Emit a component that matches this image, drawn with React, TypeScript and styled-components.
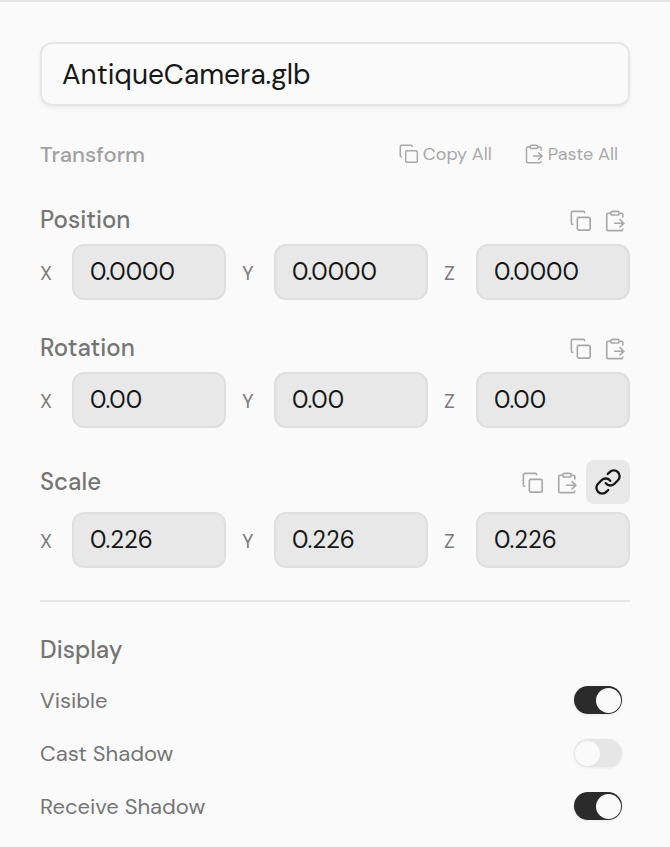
import React, { useId, useState } from "react";
import styled, { createGlobalStyle } from "styled-components";

const GlobalStyle = createGlobalStyle`
  *, *::before, *::after { box-sizing: border-box; }
  body {
    margin: 0;
    background: #fafafa;
    color: #171717;
    font-family: "DM Sans", Inter, "Liberation Sans", sans-serif;
  }
  button, input { font: inherit; color: inherit; margin: 0; }
  h2, h3 { margin: 0; }
`;

const Panel = styled.main`
  display: flex;
  flex-direction: column;
  gap: 32px;
  padding: 40px 40px 26px;
  border-top: 2px solid #e4e4e4;
`;

const NameInput = styled.input`
  width: 100%;
  height: 64px;
  padding: 0 20px;
  border: 2px solid #e6e6e6;
  border-radius: 12px;
  background: #fafafa;
  box-shadow: 0 2px 4px rgba(0, 0, 0, 0.06);
  font-size: 28px;
  outline-color: #a3a3a3;
`;

const Toolbar = styled.header`
  display: flex;
  align-items: center;
  justify-content: space-between;
  height: 34px;
  padding: 0 12px 2px 0;
`;

const PanelTitle = styled.h2`
  color: #a0a0a0;
  font-size: 22px;
  font-weight: 500;
`;

const ToolbarActions = styled.div`
  display: flex;
  gap: 32px;
`;

const TextButton = styled.button`
  display: flex;
  align-items: center;
  gap: 4px;
  padding: 0;
  border: 0;
  background: none;
  color: #a8a8a8;
  font-size: 18px;
  line-height: 24px;
  cursor: pointer;
`;

const Group = styled.section`
  display: flex;
  flex-direction: column;
  gap: 8px;
`;

const GroupHeader = styled.div`
  display: flex;
  align-items: center;
  justify-content: space-between;
  min-height: 32px;
`;

const GroupTitle = styled.h3`
  color: #757575;
  font-size: 24px;
  font-weight: 500;
  line-height: 32px;
`;

const HeaderActions = styled.div<{ $inset: boolean }>`
  display: flex;
  align-items: center;
  gap: 12px;
  padding-right: ${(p) => (p.$inset ? "4px" : "0")};
`;

const IconButton = styled.button`
  display: flex;
  padding: 2px 0 0;
  border: 0;
  background: none;
  color: #a8a8a8;
  cursor: pointer;
`;

const LinkToggle = styled.button`
  display: grid;
  place-items: center;
  width: 44px;
  height: 44px;
  margin-left: -4px;
  padding: 0;
  border: 0;
  border-radius: 8px;
  background: #e8e8e8;
  color: #171717;
  cursor: pointer;
`;

const AxisGrid = styled.div`
  display: grid;
  grid-template-columns: repeat(3, minmax(0, 1fr));
  gap: 16px;
`;

const AxisLabel = styled.label`
  display: flex;
  align-items: center;
  color: #7a7a7a;
  font-size: 20px;
`;

const AxisName = styled.span`
  flex: 0 0 32px;
  padding-top: 2px;
`;

const AxisInput = styled.input`
  flex: 1;
  min-width: 0;
  height: 56px;
  padding: 0 16px 2px;
  border: 2px solid #dfdfdf;
  border-radius: 12px;
  background: #e8e8e8;
  color: #171717;
  font-size: 24px;
  outline-color: #a3a3a3;
`;

const Divider = styled.hr`
  width: 100%;
  height: 2px;
  margin: 0;
  border: 0;
  background: #e6e6e6;
`;

const DisplaySection = styled.section`
  display: flex;
  flex-direction: column;
  gap: 20px;
`;

const OptionList = styled.div`
  display: flex;
  flex-direction: column;
  gap: 25px;
`;

const OptionRow = styled.div`
  display: flex;
  align-items: center;
  justify-content: space-between;
  height: 28px;
  padding-right: 8px;
`;

const OptionLabel = styled.label`
  padding-top: 2px;
  color: #757575;
  font-size: 22px;
  line-height: 28px;
`;

const Switch = styled.input`
  appearance: none;
  display: flex;
  align-items: center;
  width: 48px;
  height: 28px;
  padding: 1px;
  border-radius: 14px;
  background: #e6e6e6;
  box-shadow: 0 1px 3px rgba(0, 0, 0, 0.08);
  cursor: pointer;

  &::before {
    content: "";
    width: 25px;
    height: 25px;
    border-radius: 50%;
    background: #fafafa;
  }

  &:checked {
    background: #2b2b2b;
    justify-content: flex-end;
  }
`;

const Stroked = styled.svg`
  display: block;
  fill: none;
  stroke: currentColor;
  stroke-linecap: round;
  stroke-linejoin: round;
`;

function CopyIcon({ size }: { size: number }) {
  return (
    <Stroked width={size} height={size} viewBox="0 0 24 24" strokeWidth="1.8" aria-hidden="true">
      <rect x="8" y="8" width="14" height="14" rx="1.5" />
      <path d="M3 15.5A1.5 1.5 0 0 1 1.5 14V3A1.5 1.5 0 0 1 3 1.500h11.500A1.500 1.500 0 0 1 16 3" />
    </Stroked>
  );
}

function PasteIcon({ size }: { size: number }) {
  return (
    <Stroked width={size} height={size} viewBox="0 0 24 24" strokeWidth="1.8" aria-hidden="true">
      <rect x="7.5" y="1.5" width="9" height="4" rx="1.5" />
      <path d="M7.5 3.5h-3A1.5 1.5 0 0 0 3 5v16a1.5 1.5 0 0 0 1.5 1.5h14.2a1.8 1.8 0 0 0 1.8-1.5" />
      <path d="M16.5 3.5H19A1.5 1.5 0 0 1 20.5 5v2.5" />
      <path d="M11.5 14.5h10" />
      <path d="m17.5 10.5 4 4-4 4" />
    </Stroked>
  );
}

function LinkIcon() {
  return (
    <Stroked width="28" height="28" viewBox="0 0 24 24" strokeWidth="2" aria-hidden="true">
      <path d="M10 13a5 5 0 0 0 7.54.54l3-3a5 5 0 0 0-7.07-7.07l-1.72 1.71" />
      <path d="M14 11a5 5 0 0 0-7.54-.54l-3 3a5 5 0 0 0 7.07 7.07l1.71-1.71" />
    </Stroked>
  );
}

type VectorProps = { title: string; initial: string; linkable?: boolean };

function VectorGroup({ title, initial, linkable = false }: VectorProps) {
  const [values, setValues] = useState([initial, initial, initial]);
  const [linked, setLinked] = useState(linkable);

  const update = (index: number, value: string) =>
    setValues((prev) => prev.map((v, i) => (linked || i === index ? value : v)));

  return (
    <Group>
      <GroupHeader>
        <GroupTitle>{title}</GroupTitle>
        <HeaderActions $inset={!linkable}>
          <IconButton type="button" aria-label={`Copy ${title}`}>
            <CopyIcon size={22} />
          </IconButton>
          <IconButton type="button" aria-label={`Paste ${title}`}>
            <PasteIcon size={22} />
          </IconButton>
          {linkable && (
            <LinkToggle
              type="button"
              aria-label="Link axes"
              aria-pressed={linked}
              onClick={() => setLinked(!linked)}
            >
              <LinkIcon />
            </LinkToggle>
          )}
        </HeaderActions>
      </GroupHeader>
      <AxisGrid>
        {["X", "Y", "Z"].map((axis, i) => (
          <AxisLabel key={axis}>
            <AxisName>{axis}</AxisName>
            <AxisInput
              inputMode="decimal"
              value={values[i]}
              onChange={(e) => update(i, e.target.value)}
            />
          </AxisLabel>
        ))}
      </AxisGrid>
    </Group>
  );
}

function Option({ label, checked = false }: { label: string; checked?: boolean }) {
  const id = useId();
  return (
    <OptionRow>
      <OptionLabel htmlFor={id}>{label}</OptionLabel>
      <Switch id={id} type="checkbox" role="switch" defaultChecked={checked} />
    </OptionRow>
  );
}

export default function App() {
  return (
    <>
      <GlobalStyle />
      <Panel>
        <NameInput aria-label="Object name" defaultValue="AntiqueCamera.glb" spellCheck={false} />
        <Toolbar>
          <PanelTitle>Transform</PanelTitle>
          <ToolbarActions>
            <TextButton type="button">
              <CopyIcon size={20} />
              Copy All
            </TextButton>
            <TextButton type="button">
              <PasteIcon size={20} />
              Paste All
            </TextButton>
          </ToolbarActions>
        </Toolbar>
        <VectorGroup title="Position" initial="0.0000" />
        <VectorGroup title="Rotation" initial="0.00" />
        <VectorGroup title="Scale" initial="0.226" linkable />
        <Divider />
        <DisplaySection>
          <GroupTitle as="h2">Display</GroupTitle>
          <OptionList>
            <Option label="Visible" checked />
            <Option label="Cast Shadow" />
            <Option label="Receive Shadow" checked />
          </OptionList>
        </DisplaySection>
      </Panel>
    </>
  );
}
